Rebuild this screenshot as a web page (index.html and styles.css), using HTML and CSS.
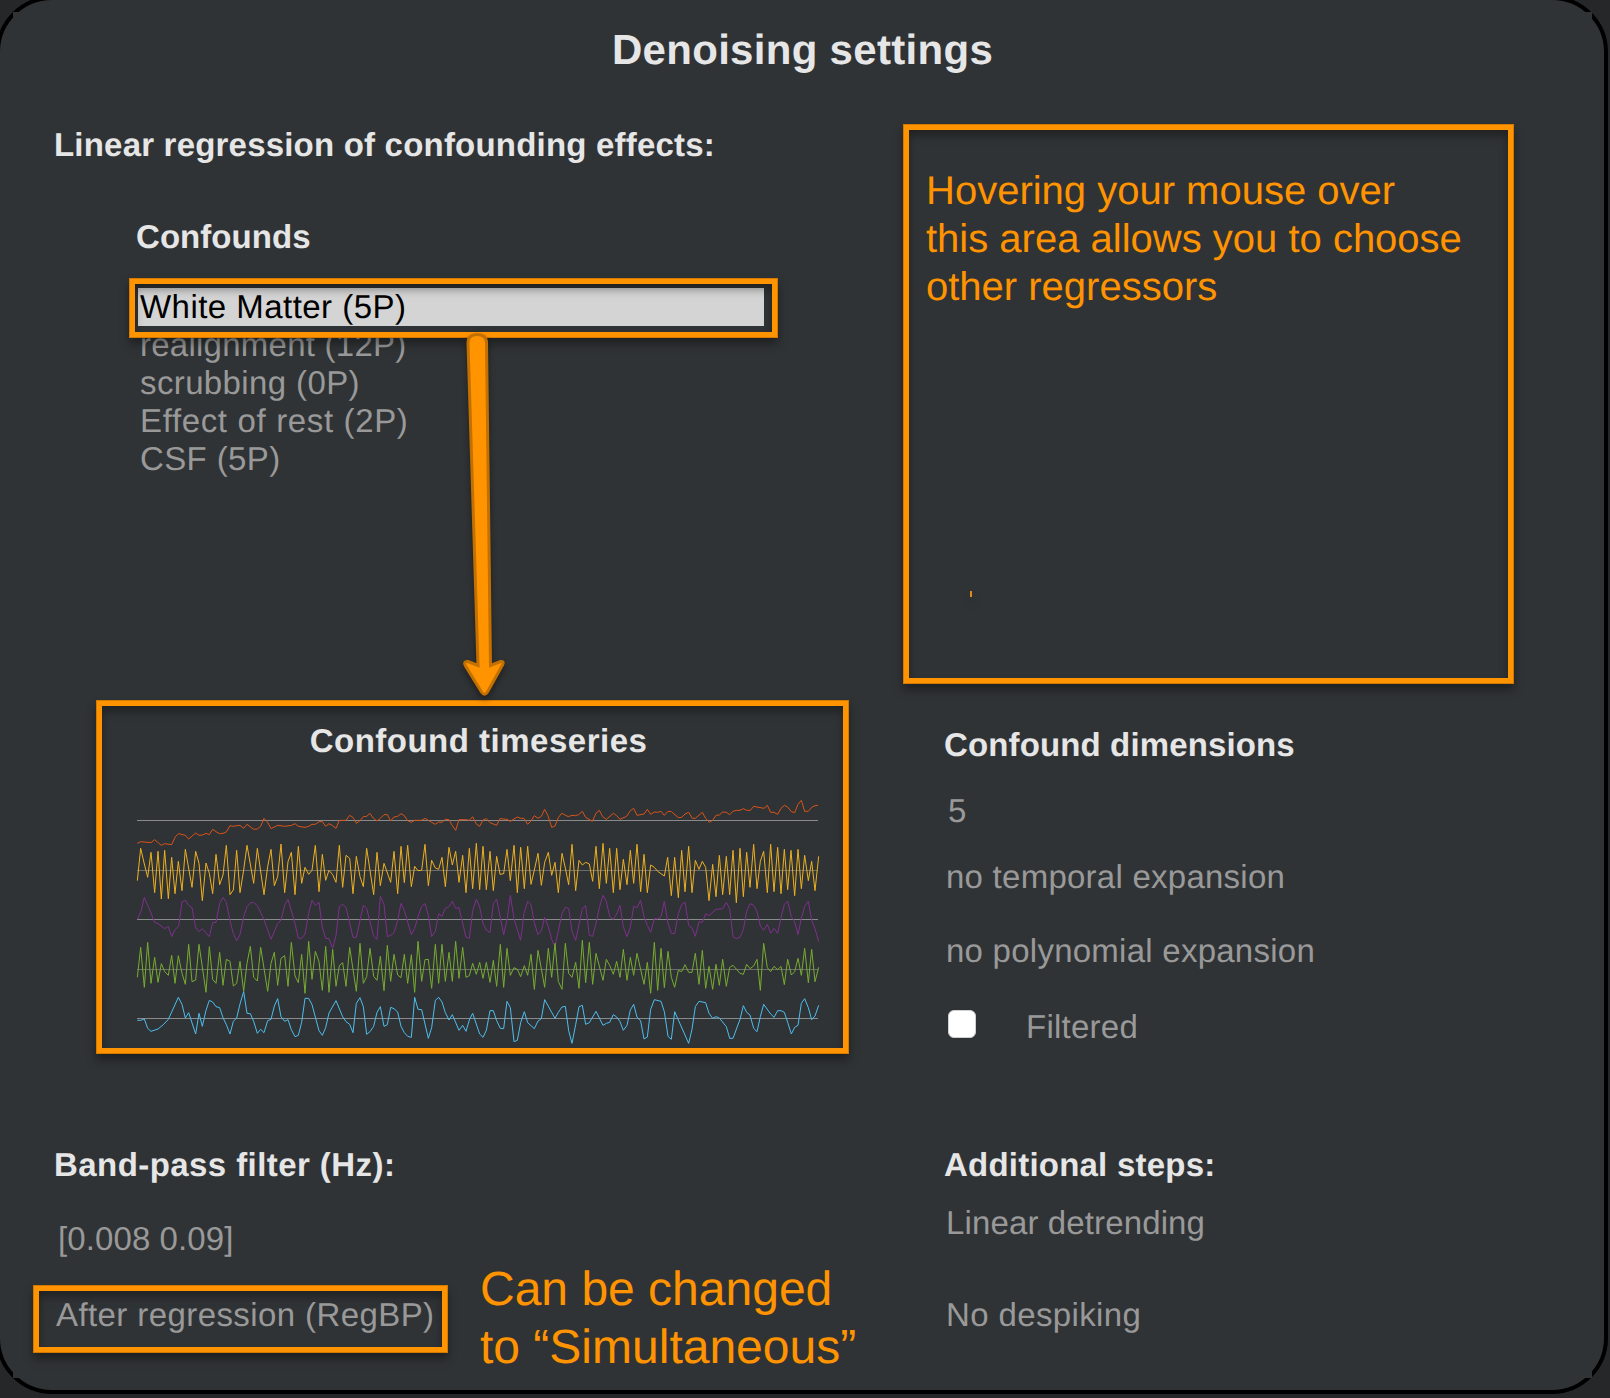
FILE: index.html
```html
<!DOCTYPE html>
<html lang="en">
<head>
<meta charset="utf-8">
<title>Denoising settings</title>
<link rel="stylesheet" href="styles.css">
</head>
<body>
<main class="panel">
<div class="content">
  <h1 class="title">Denoising settings</h1>
  <div class="columns">
    <section class="left">
      <h2 class="regression-title">Linear regression of confounding effects:</h2>
      <h2 class="confounds-title">Confounds</h2>
      <div class="confounds">
        <ul class="list">
          <li class="selected">White Matter (5P)</li>
          <li class="t-realign">realignment (12P)</li>
          <li class="t-scrub">scrubbing (0P)</li>
          <li class="t-effect">Effect of rest (2P)</li>
          <li class="t-csf">CSF (5P)</li>
        </ul>
        <div class="frame list-frame"></div>
        <svg class="arrow" width="60" height="380" viewBox="454 326 60 380">
          <path d="M468 343Q468 334.5 477 334.5Q486.500 334.5 486.500 343L490.500 665.500L500.500 661.500Q504.500 661 502.500 665L487.500 692Q484.500 696.500 481.500 692L465.500 666Q463 661 468 661.500L478 665.500Z"/>
        </svg>
      </div>
      <div class="frame series">
        <h2 class="series-title">Confound timeseries</h2>
        <svg class="chart" width="682" height="250" viewBox="141 321 2046 750">
          <g class="axis"><path d="M141 391.500H2184M141 688.500H2184M141 985.500H2184"/><path class="dim" d="M141 541.500H2184M141 838.500H2184"/></g>
          <g class="s1">
            <polyline points="142,460 152,455 183,458 194,449 214,466 224,461 245,464 256,440 266,431 286,436 296,447 317,429 327,436 337,435 348,430 358,434 368,418 378,425 389,431 399,430 409,426 420,407 430,409 440,407 450,406 461,415 471,403 491,418 502,417 512,409 522,385 533,397 543,416 563,406 584,409 605,406 615,401 625,409 645,412 656,409 666,403 676,403 687,395 697,395 707,409 717,401 728,407 738,415 748,391 768,391 779,376 789,382 799,400 810,392 820,380 830,379 840,370 850,385 861,393 871,385 882,374 892,374 902,393 912,381 923,379 933,371 943,377 953,392 964,397 974,391 995,391 1005,385 1015,391 1025,397 1036,403 1046,396 1056,397 1066,388 1077,389 1087,407 1097,421 1107,389 1128,389 1138,391 1148,380 1158,401 1169,409 1179,390 1189,386 1200,398"/>
            <polyline transform="translate(1110)" points="90,398 110,406 120,386 141,388 151,394 172,381 182,385 192,385 203,403 213,393 223,377 234,385 244,379 254,358 264,377 275,412 285,408 295,383 305,370 325,380 336,376 346,377 356,374 367,364 377,382 397,394 408,370 418,361 428,380 439,388 460,370 470,377 480,388 500,379 511,362 521,355 531,376 552,372 562,358 572,373 583,366 593,367 603,364 613,376 624,364 634,365 655,383 665,382 675,372 686,367 697,385 706,385 727,367 737,385 748,397 758,391 768,376 778,375 788,366 799,367 809,374 819,364 829,361 840,361 850,356 860,361 871,361 881,349 891,351 912,355 922,346 932,367 942,367 953,373 963,355 973,346 983,351 994,365 1004,368 1014,343 1024,331 1034,364 1045,364 1055,352 1065,347 1074,346"/>
          </g>
          <g class="s2">
            <polyline points="142,572 152,475 163,522 173,562 183,487 194,608 204,484 214,627 224,481 235,626 245,502 255,611 265,514 276,602 286,478 306,592 317,484 327,520 337,632 348,519 358,550 368,611 378,493 389,584 399,555 409,466 420,614 430,600 440,481 450,608 461,540 471,466 491,580 502,475 522,614 533,530 543,478 553,587 563,560 573,462 584,608 594,515 604,487 615,614 625,469 635,580 645,532 656,553 666,541 676,466 687,605 697,493 707,571 717,541 728,554 738,577 748,466 758,592 768,496 779,505 789,611 799,499 810,560 820,590 830,475 851,614 861,487 871,587 882,520 902,577 912,484 923,611 933,469 943,578 953,466 964,590 974,529 984,542 995,541 1005,463 1015,587 1025,511 1036,534 1046,538 1056,502 1066,590 1077,472 1087,525 1097,484 1107,577 1118,496 1128,608 1138,475 1148,596 1159,460 1169,599 1179,469 1189,599 1200,484"/>
            <polyline transform="translate(1110)" points="90,484 100,602 110,499 120,553 131,551 141,478 151,572 162,466 172,608 182,472 193,596 203,469 213,583 223,540 234,490 244,586 254,517 265,487 275,556 285,517 295,608 306,490 316,534 326,584 336,463 347,602 357,511 367,525 377,517 388,522 398,574 408,469 418,596 429,460 439,580 449,475 460,608 470,475 480,599 490,508 501,584 511,481 521,580 531,463 542,605 552,493 562,608 572,525 583,532 593,544 613,558 623,502 634,617 644,502 655,623 665,481 675,605 686,469 696,608 706,511 717,538 727,514 737,532 747,632 758,523 768,620 778,496 788,614 799,499 809,614 819,481 829,638 840,475 850,620 860,487 870,592 881,463 891,596 901,514 911,484 922,608 932,463 942,605 953,472 963,611 973,478 983,599 993,481 1004,617 1014,478 1024,596 1034,496 1045,572 1055,514 1065,602 1076,499"/>
          </g>
          <g class="s3">
            <polyline points="142,688 153,664 163,622 183,669 194,697 204,701 224,716 235,709 245,740 255,719 266,709 276,635 286,631 296,646 306,653 317,713 327,725 337,716 358,740 368,698 378,697 389,640 399,622 409,637 420,692 430,731 440,752 450,734 461,680 471,650 481,639 491,637 502,647 522,689 543,748 563,701 573,690 584,646 594,628 615,700 625,745 635,745 645,732 656,670 666,631 676,646 687,637 697,712 707,745 717,746 728,775 738,737 748,650 758,643 768,652 789,742 799,742 820,646 830,655 851,739 861,748 871,619 882,643 892,740 902,736 912,728 923,692 933,640 943,661 964,734 974,715 984,680 995,649 1005,641 1015,676 1025,740 1036,724 1046,671 1056,679 1066,655 1077,650 1087,634 1097,655 1107,653 1128,742 1138,745 1148,662 1159,628 1169,651 1179,700 1189,720 1200,728"/>
            <polyline transform="translate(1110)" points="90,728 100,640 110,628 131,734 141,690 151,616 162,686 182,751 192,670 203,634 213,644 223,698 234,734 244,722 254,682 265,710 275,748 285,769 306,671 316,652 326,655 336,724 347,751 367,656 377,647 388,736 398,739 408,700 418,653 429,616 439,634 449,680 460,688 470,672 480,646 490,710 501,740 511,712 521,649 531,653 542,631 552,680 562,706 572,727 583,686 593,687 603,680 613,634 624,700 634,730 644,731 655,671 665,644 675,636 686,706 696,714 706,739 717,695 727,697 737,671 747,677 768,658 788,656 799,637 809,656 819,740 829,746 840,742 850,719 860,664 870,641 881,646 891,665 901,708 911,721 922,703 932,730 942,715 953,730 963,683 973,643 983,634 994,680 1004,695 1014,734 1024,685 1034,649 1045,634 1055,690 1065,716 1076,755"/>
          </g>
          <g class="s4">
            <polyline points="142,862 152,772 163,892 173,757 183,880 194,802 204,877 214,821 224,845 235,856 245,796 255,880 265,797 276,850 286,883 296,763 306,875 317,870 327,763 348,907 358,770 368,868 378,880 389,787 399,886 409,808 420,814 430,888 440,880 450,814 461,904 471,820 481,769 491,862 502,873 512,772 533,904 543,820 553,787 563,886 573,805 584,797 594,889 604,757 615,858 625,878 635,793 645,910 656,754 666,868 676,784 687,815 697,901 707,769 717,907 728,778 738,889 748,827 758,818 768,889 779,772 799,904 810,760 820,880 830,860 840,775 851,859 861,871 871,799 882,902 892,766 902,874 912,793 923,855 933,863 943,793 953,880 964,794 974,907 984,754 995,874 1005,809 1015,808 1025,895 1036,763 1046,880 1056,763 1066,874 1077,787 1087,874 1097,754 1107,865 1118,772 1128,862 1138,857 1148,820 1159,853 1169,817 1179,865 1189,817 1200,877"/>
            <polyline transform="translate(1110)" points="90,877 100,811 110,889 121,763 131,892 141,775 151,856 162,833 172,838 182,860 193,827 203,856 213,793 223,898 234,781 254,892 265,775 275,862 285,760 295,874 306,898 316,760 326,850 336,862 347,817 357,895 367,751 377,878 388,757 398,883 408,790 429,871 439,808 449,826 460,853 470,814 480,862 490,778 501,871 511,802 521,856 531,790 552,883 562,817 572,910 583,757 593,901 603,775 613,893 624,784 634,862 644,892 655,841 665,845 675,824 686,847 696,847 706,790 717,883 727,781 737,895 747,829 758,898 768,823 778,886 788,808 799,889 809,832 819,826 840,850 850,853 860,823 870,836 881,828 891,808 901,901 911,760 922,833 932,845 942,829 953,839 963,829 973,884 983,808 994,855 1004,845 1014,805 1024,856 1034,775 1045,878 1055,778 1065,875 1076,832"/>
          </g>
          <g class="s5">
            <polyline points="142,991 152,991 163,987 173,1015 183,1024 204,1017 220,1004 235,988 265,922 276,943 286,984 296,968 317,1032 327,970 337,1009 348,961 358,931 368,936 378,950 389,953 399,983 409,1004 420,1032 430,994 440,984 450,942 461,905 471,970 481,971 491,994 502,1030 512,1018 522,1028 533,992 543,988 553,948 563,926 573,980 584,994 594,989 604,1019 615,1040 625,1036 635,997 645,925 656,925 666,944 687,1022 697,1036 707,1013 717,969 738,932 758,980 768,995 779,1003 789,1028 799,940 810,923 820,950 830,1033 840,1025 851,1009 861,967 871,950 882,1009 892,1004 902,952 912,956 923,966 933,1009 943,1028 953,1039 964,1042 974,922 984,958 995,959 1015,1045 1025,1013 1036,931 1046,922 1056,936 1066,968 1077,990 1087,974 1107,1021 1118,1006 1128,1024 1138,990 1148,970 1169,1032 1179,1042 1189,1021 1200,962"/>
            <polyline transform="translate(1110)" points="90,962 100,962 110,992 121,1015 131,1016 141,934 151,953 162,1055 172,1051 182,998 193,965 203,998 223,1016 234,993 244,986 254,929 285,985 295,967 306,951 316,949 326,1022 336,1060 347,1004 357,950 367,946 377,1003 388,998 408,964 429,1006 439,1000 449,997 460,974 470,981 480,995 490,1021 501,1006 511,960 521,943 531,981 542,993 552,1047 562,1041 572,958 583,929 603,934 613,965 624,1039 634,1048 644,965 686,1060 696,1018 706,950 717,934 737,938 747,970 758,985 768,980 778,984 799,1010 809,1045 819,1045 840,988 850,947 860,967 870,975 881,1015 891,1025 901,980 911,943 932,972 942,982 953,962 963,962 973,967 983,997 994,1032 1004,1012 1014,1006 1024,940 1034,926 1045,953 1055,989 1065,978 1076,946"/>
          </g>
        </svg>
      </div>
      <h2 class="band-title">Band-pass filter (Hz):</h2>
      <div class="band">
        <div class="band-values">
          <p class="range">[0.008 0.09]</p>
          <div class="frame order"><p class="t-after">After regression (RegBP)</p></div>
        </div>
        <p class="note order-note">Can be changed<br>to “Simultaneous”</p>
      </div>
    </section>
    <section class="right">
      <div class="frame hover-area">
        <p class="note">Hovering your mouse over<br>this area allows you to choose<br>other regressors</p>
        <span class="tick"></span>
      </div>
      <h2 class="dim-title">Confound dimensions</h2>
      <div class="dims">
        <p class="d-count">5</p>
        <p class="d-temp">no temporal expansion</p>
        <p class="d-poly">no polynomial expansion</p>
        <label class="filter"><span class="checkbox"></span><span class="t-filter">Filtered</span></label>
      </div>
      <h2 class="steps-title">Additional steps:</h2>
      <div class="steps">
        <p class="s-detrend">Linear detrending</p>
        <p class="s-despike">No despiking</p>
      </div>
    </section>
  </div>
</div>
</main>
</body>
</html>
```
FILE: styles.css
```css
* { box-sizing: border-box; margin: 0; padding: 0; }
body {
  width: 1610px;
  height: 1398px;
  overflow: hidden;
  background: #262728;
  font: 33px/38px "Liberation Sans", Arial, sans-serif;
  color: #999;
  text-rendering: geometricPrecision;
  white-space: nowrap;
}
.panel {
  width: 1612px;
  height: 1398px;
  margin: -4px 0 0 -4px;
  padding: 12px 0 0 13px;
  border: 4px solid #000;
  border-radius: 56px;
  background: #303335;
}
.content { width: 1579px; height: 1366px; background: #303335; }
h1, h2 { color: #e6e6e6; font-weight: bold; }
h2 { font-size: 33px; }
.title {
  height: 99px;
  padding-top: 14px;
  font-size: 42px;
  line-height: 48px;
  letter-spacing: 0.3px;
  text-align: center;
}
.columns { display: grid; grid-template-columns: 890px 1fr; }
.left, .right { display: flex; flex-direction: column; align-items: flex-start; }

/* Orange call-outs */
.frame {
  border: 6px solid #ff9300;
  outline: 1px solid rgba(160, 90, 0, 0.45);
  outline-offset: -1px;
  box-shadow: 0 6px 9px rgba(0, 0, 0, 0.38), inset 0 6px 9px rgba(0, 0, 0, 0.34);
}
.note { color: #ff9300; font-size: 40px; line-height: 48px; }

/* Left column */
.regression-title { margin: 15px 0 0 41px; letter-spacing: 0.2px; }
.confounds-title { margin: 54px 0 0 123px; letter-spacing: 0.05px; }
.confounds { position: relative; width: 626px; height: 412px; margin: 32px 0 0 125px; }
.list { list-style: none; }
.list li { padding-left: 2px; letter-spacing: 0.38px; }
.list .selected { background: #d4d4d4; color: #000; letter-spacing: 0.46px; }
.list .t-realign { letter-spacing: 0.25px; }
.list .t-effect { letter-spacing: 0.65px; }
.list-frame { position: absolute; left: -9px; top: -10px; width: 649px; height: 60px; }
.arrow { position: absolute; left: 316px; top: 38px; z-index: 1; filter: drop-shadow(0 4px 3px rgba(0, 0, 0, 0.4)); }
.arrow path { fill: #ff9300; stroke: #c27000; stroke-width: 3; }
.series { width: 753px; height: 354px; margin-left: 83px; padding: 16px 0 0 35px; }
.series-title { width: 683px; text-align: center; letter-spacing: 0.5px; }
.chart { display: block; margin-top: 37px; overflow: visible; fill: none; stroke-width: 3; stroke-linejoin: round; }
.axis { stroke: #8a8a8a; }
.axis .dim { stroke: #6c6c6c; }
.s1 { stroke: #d95319; }
.s2 { stroke: #edb120; }
.s3 { stroke: #7e2f8e; }
.s4 { stroke: #77ac30; }
.s5 { stroke: #4dbeee; }
.band-title { margin: 92px 0 0 41px; letter-spacing: 0.43px; }
.band { display: flex; align-items: flex-start; margin: 36px 0 0 20px; }
.band-values { width: 447px; }
.range { padding-left: 25px; letter-spacing: 0.1px; }
.order { width: 415px; height: 68px; margin-top: 27px; padding: 5px 0 0 17px; }
.t-after { letter-spacing: 0.41px; }
.order-note { margin-top: 41px; font-size: 48px; line-height: 58px; }

/* Right column */
.hover-area { width: 611px; height: 560px; margin-top: 13px; padding: 37px 0 0 17px; position: relative; }
.tick {
  position: absolute;
  left: 61px;
  top: 461px;
  width: 2px;
  height: 6px;
  background: #e08a1a;
  box-shadow: 0 6px 8px rgba(0, 0, 0, 0.35);
}
.dim-title { margin: 42px 0 0 41px; letter-spacing: 0.13px; }
.dims { display: flex; flex-direction: column; margin: 28px 0 0 43px; letter-spacing: 0.25px; }
.d-count { padding-left: 2px; }
.d-temp { margin-top: 28px; }
.d-poly { margin-top: 36px; }
.filter { display: flex; align-items: center; gap: 50px; margin: 38px 0 0 2px; }
.checkbox { width: 28px; height: 28px; margin-top: -6px; border: 1px solid #d0d0d0; border-radius: 6px; background: #fff; }
.steps-title { margin: 100px 0 0 41px; letter-spacing: 0.22px; }
.steps { margin: 20px 0 0 43px; }
.s-detrend { letter-spacing: 0.13px; }
.s-despike { margin-top: 54px; letter-spacing: 0.37px; }
```
